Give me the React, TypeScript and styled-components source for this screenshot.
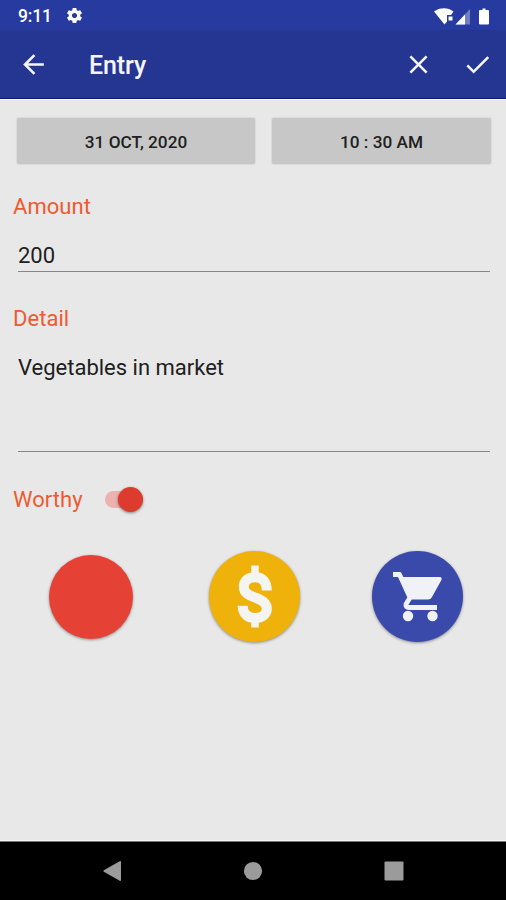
import React from "react";
import styled, { createGlobalStyle } from "styled-components";

const GlobalStyle = createGlobalStyle`
  * { box-sizing: border-box; }
  body { margin: 0; background: #e8e8e8; }
  button { border: 0; padding: 0; font: inherit; color: inherit; background: none; }
  svg { display: block; flex: none; }
`;

const Screen = styled.div`
  width: 506px;
  height: 900px;
  display: flex;
  flex-direction: column;
  overflow: hidden;
  background: #e8e8e8;
  color: #202020;
  font-family: Roboto, sans-serif;
`;

const StatusBar = styled.header`
  height: 30px;
  display: flex;
  align-items: center;
  padding: 1px 14px 0 18px;
  background: #263a9f;
  color: #fff;
`;

const Clock = styled.span`
  width: 47px;
  font-size: 17.5px;
  font-weight: 500;
  letter-spacing: -0.2px;
`;

const StatusIcons = styled.div`
  display: flex;
  margin-left: auto;
`;

const AppBar = styled.nav`
  height: 69px;
  display: flex;
  align-items: center;
  padding: 0 13px 0 18px;
  background: #253592;
  color: #f4f5ff;
  border-bottom: 1px solid #10167c;
`;

const IconButton = styled.button`
  width: 31px;
  height: 31px;
`;

const Title = styled.h1`
  flex: 1;
  margin: 3px 0 0 40px;
  font-size: 25px;
  font-weight: 500;
  letter-spacing: -0.1px;
`;

const Actions = styled.div`
  display: flex;
  gap: 28px;
`;

const Form = styled.main`
  flex: 1;
  display: flex;
  flex-direction: column;
  padding: 18px 16px 0 13px;
  border-top: 1px solid #f7f7f7;
  border-bottom: 1px solid #f5f5f5;
`;

const DateRow = styled.div`
  display: grid;
  grid-template-columns: 238px 219px;
  gap: 17px;
  margin-left: 4px;
`;

const PickerButton = styled.button`
  height: 46px;
  padding-top: 2px;
  border-radius: 2px;
  background: #c7c7c7;
  box-shadow: 0 0 1px 1px #dadada;
  font-size: 17.2px;
  font-weight: 500;
`;

const Label = styled.label<{ $top?: number }>`
  height: 28px;
  margin-top: ${(p) => p.$top ?? 0}px;
  line-height: 28px;
  font-size: 22px;
  letter-spacing: 0.05px;
  color: #ef5a31;
`;

const Field = styled.div<{ $height: number }>`
  height: ${(p) => p.$height}px;
  margin-left: 5px;
  padding-top: 20px;
  line-height: 30px;
  font-size: 22px;
  border-bottom: 1.5px solid #878787;
`;

const WorthyRow = styled.div`
  display: flex;
  align-items: center;
  margin-top: 34px;
  height: 28px;
`;

const SwitchTrack = styled.button`
  width: 38px;
  height: 17px;
  margin: -2px 0 0 22px;
  display: flex;
  align-items: center;
  justify-content: flex-end;
  border-radius: 9px;
  background: #ebb2ae;
`;

const SwitchThumb = styled.span`
  width: 25px;
  height: 25px;
  flex: none;
  border-radius: 50%;
  background: #dd3b2e;
  box-shadow: 0 1px 3px #0007;
`;

const Categories = styled.div`
  display: flex;
  align-items: center;
  margin: 37px 0 0 36px;
`;

const Category = styled.button<{ $size: number; $color: string; $left?: number }>`
  width: ${(p) => p.$size}px;
  height: ${(p) => p.$size}px;
  margin-left: ${(p) => p.$left ?? 0}px;
  border-radius: 50%;
  background: ${(p) => p.$color};
  box-shadow: 0 1px 3px #0006;
`;

const SystemNav = styled.footer`
  height: 59px;
  display: flex;
  align-items: center;
  justify-content: space-between;
  padding: 0 102px;
  background: #000;
  border-top: 1px solid #777;
`;

const Glyph = ({ d }: { d: string }) => (
  <svg width="31" height="31" viewBox="0 0 24 24" fill="currentColor">
    <path d={d} />
  </svg>
);

const Gear = () => (
  <svg width="19" height="19" viewBox="0 0 24 24" fill="currentColor">
    <path d="M19.14 12.94c.04-.3.06-.61.06-.94 0-.32-.02-.64-.07-.94l2.03-1.58c.18-.14.23-.41.12-.61l-1.92-3.32c-.12-.22-.37-.29-.59-.22l-2.39.96c-.5-.38-1.03-.7-1.62-.94l-.36-2.54c-.04-.24-.24-.41-.48-.41h-3.84c-.24 0-.43.17-.47.41l-.36 2.54c-.59.24-1.13.57-1.62.94l-2.39-.96c-.22-.08-.47 0-.59.22L2.74 8.87c-.12.21-.08.47.12.61l2.03 1.58c-.05.3-.09.63-.09.94s.02.64.07.94l-2.03 1.58c-.18.14-.23.41-.12.61l1.92 3.32c.12.22.37.29.59.22l2.39-.96c.5.38 1.03.7 1.62.94l.36 2.54c.05.24.24.41.48.41h3.84c.24 0 .44-.17.47-.41l.36-2.54c.59-.24 1.13-.56 1.62-.94l2.39.96c.22.08.47 0 .59-.22l1.92-3.32c.12-.22.07-.47-.12-.61l-2.01-1.58zM12 15.3c-1.8 0-3.3-1.5-3.3-3.3s1.5-3.3 3.3-3.3 3.3 1.5 3.3 3.3-1.5 3.3-3.3 3.3z" />
  </svg>
);

const Indicators = () => (
  <svg width="58" height="20" viewBox="0 0 58 20" fill="#fff">
    <path d="M0 5.5C5.5 1 14.5 1 19.5 5.5L17 9h-4v6.5l-2.5 3Z" />
    <path d="M14.5 10.5h4v4h-4z" />
    <path d="M36 3v15.5H21.5Z" fillOpacity=".35" />
    <path d="M31 8.5v10h-9.5Z" />
    <path d="M46 4h2.5V2.5h3V4H54q1 0 1 1v12.5q0 1-1 1h-8q-1 0-1-1V5q0-1 1-1Z" />
  </svg>
);

const Dollar = () => (
  <svg width="91" height="91" viewBox="0 0 91 91" fill="none" stroke="#f4f4f0">
    <path d="M46 14.5v11M46 66v10.5" strokeWidth="7.5" />
    <path
      d="M57.7 39.5C57.7 31 54 26.3 46.2 26.3S34.8 30.5 34.8 35.8C34.8 42 39.5 44.3 46 46.5S57.8 51.5 57.8 57.5 53 67 46 67 33.7 63 33.7 54.7"
      strokeWidth="10"
    />
  </svg>
);

const Cart = () => (
  <svg width="91" height="91" viewBox="0 0 91 91" fill="#f1f2f8">
    <path
      d="M21 23.5h6.5L38 46.5 34 53.2Q33.2 56.5 37 56.5H65"
      fill="none"
      stroke="#f1f2f8"
      strokeWidth="4.8"
      strokeLinejoin="round"
    />
    <path d="M28 26H68Q70.3 26.3 69.4 29L60 46Q58.8 48.6 56 48.6H39Z" />
    <circle cx="36" cy="65" r="5.2" />
    <circle cx="60.5" cy="65" r="5.2" />
  </svg>
);

export default function App() {
  return (
    <>
      <GlobalStyle />
      <Screen>
        <StatusBar>
          <Clock>9:11</Clock>
          <Gear />
          <StatusIcons>
            <Indicators />
          </StatusIcons>
        </StatusBar>
        <AppBar>
          <IconButton aria-label="Back">
            <Glyph d="M20 11H7.83l5.59-5.59L12 4l-8 8 8 8 1.41-1.41L7.83 13H20v-2z" />
          </IconButton>
          <Title>Entry</Title>
          <Actions>
            <IconButton aria-label="Discard">
              <Glyph d="M19 6.41L17.59 5 12 10.59 6.41 5 5 6.41 10.59 12 5 17.59 6.41 19 12 13.41 17.59 19 19 17.59 13.41 12z" />
            </IconButton>
            <IconButton aria-label="Save">
              <Glyph d="M9 16.17L4.83 12l-1.42 1.41L9 19 21 7l-1.41-1.41z" />
            </IconButton>
          </Actions>
        </AppBar>
        <Form>
          <DateRow>
            <PickerButton>31 OCT, 2020</PickerButton>
            <PickerButton>10 : 30 AM</PickerButton>
          </DateRow>
          <Label $top={29}>Amount</Label>
          <Field $height={51}>200</Field>
          <Label $top={33}>Detail</Label>
          <Field $height={119}>Vegetables in market</Field>
          <WorthyRow>
            <Label>Worthy</Label>
            <SwitchTrack role="switch" aria-checked="true" aria-label="Worthy">
              <SwitchThumb />
            </SwitchTrack>
          </WorthyRow>
          <Categories>
            <Category $size={84} $color="#e54235" aria-label="Red" />
            <Category $size={91} $color="#eeb20a" $left={76} aria-label="Money">
              <Dollar />
            </Category>
            <Category $size={91} $color="#3a4aab" $left={72} aria-label="Shopping">
              <Cart />
            </Category>
          </Categories>
        </Form>
        <SystemNav>
          <svg width="20" height="22" viewBox="0 0 20 22" fill="#9b9b9b">
            <path d="M19 1.5v19q-.5.8-1.3.3L1.8 11.7q-.9-.7 0-1.4L17.7 1.2q.8-.5 1.3.3Z" />
          </svg>
          <svg width="20" height="20" viewBox="0 0 20 20" fill="#9b9b9b">
            <circle cx="10" cy="10" r="9.1" />
          </svg>
          <svg width="20" height="20" viewBox="0 0 20 20" fill="#9b9b9b">
            <rect x=".5" y=".5" width="19" height="19" rx="1" />
          </svg>
        </SystemNav>
      </Screen>
    </>
  );
}
